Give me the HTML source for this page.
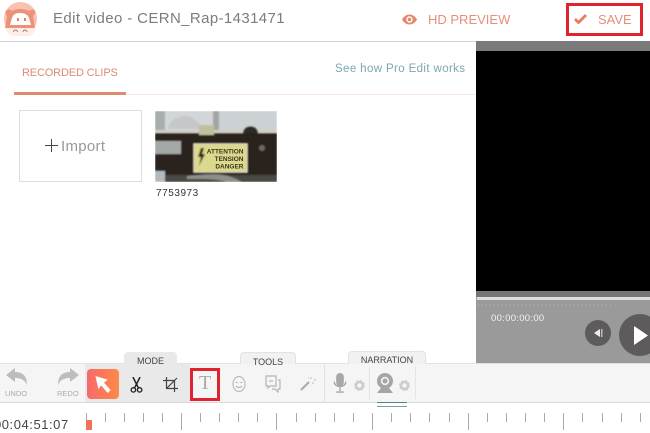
<!DOCTYPE html>
<html><head><meta charset="utf-8"><style>
html,body{margin:0;padding:0}
body{width:650px;height:430px;overflow:hidden;background:#fff;position:relative;font-family:"Liberation Sans",sans-serif}
.a{position:absolute;white-space:nowrap}
.tick{position:absolute;top:413px;width:1px;height:9px;background:#aaa}
.tall{height:17px;background:#aaa}
.tab{position:absolute;background:#f1f1f1;border:1px solid #e2e2e2;border-bottom:none;border-radius:4px 4px 0 0;font-size:9px;color:#444;text-align:center;box-sizing:border-box}
</style></head><body>
<!-- Header -->
<div class="a" style="left:0;top:41px;width:650px;height:1px;background:#d5d5d5"></div>
<svg class="a" style="left:0;top:0" width="42" height="36" viewBox="0 0 42 36">
<defs><filter id="s"><feGaussianBlur stdDeviation=".35"/></filter></defs>
<g filter="url(#s)">
<circle cx="20.500" cy="18.500" r="16.500" fill="#f9c2b0"/>
<path d="M5 28a16.500 16.500 0 0 0 31 0z" fill="#fdeee8"/>
<path d="M6 11c1-2 4-2 6 0 2-1 4-2 8-2s7 1 9 2c2-2 5-2 6 0 1 2-1 4-2 5l2 12H5l2-12c-1-1-2-3-1-5z" fill="#ec9279"/>
<path d="M10 25l2-7c1-3 3-5 8-5s8 2 9 5l2 7z" fill="#fff"/>
<rect x="17" y="18" width="1.800" height="3" fill="#d9785f"/><rect x="24" y="18" width="1.800" height="3" fill="#d9785f"/>
<path d="M13.500 32a2 2 0 0 1 4 0M23 32a2 2 0 0 1 4 0" fill="none" stroke="#b8766a"/>
</g>
</svg>
<div class="a" style="left:53px;top:10px;font-size:15px;color:#7c7c7c;letter-spacing:.38px;line-height:18px">Edit video - CERN_Rap-1431471</div>
<svg class="a" style="left:402px;top:14px" width="15" height="11" viewBox="0 0 15 11"><path d="M0 5.500C2 2 5 .5 7.500.5S13 2 15 5.500C13 9 10 10.500 7.500 10.500S2 9 0 5.500z" fill="#e3876c"/><circle cx="7.500" cy="5.500" r="3.200" fill="#fff"/><circle cx="7.500" cy="5.500" r="1.800" fill="#e3876c"/></svg>
<div class="a" style="left:428px;top:12px;font-size:13px;color:#e3907a;letter-spacing:0;line-height:16px">HD PREVIEW</div>
<div class="a" style="left:566px;top:3px;width:77px;height:33px;box-sizing:border-box;border:3px solid #e0242f"></div>
<svg class="a" style="left:574px;top:13px" width="13" height="11" viewBox="0 0 13 11"><path d="M1 6l3.500 3.500L12 2" fill="none" stroke="#e67c5e" stroke-width="2.800"/></svg>
<div class="a" style="left:598px;top:12px;font-size:13px;color:#e3907a;line-height:16px">SAVE</div>
<!-- Tabs -->
<div class="a" style="left:22px;top:66px;font-size:11px;color:#dc8a75;line-height:14px;letter-spacing:-.15px">RECORDED CLIPS</div>
<div class="a" style="left:14px;top:92px;width:112px;height:3px;background:#e08a72"></div>
<div class="a" style="left:126px;top:94px;width:350px;height:1px;background:#f8e6e0"></div>
<div class="a" style="left:335px;top:62px;font-size:11.500px;color:#7ba6b3;line-height:14px;letter-spacing:.38px">See how Pro Edit works</div>
<!-- Import -->
<div class="a" style="left:19px;top:110px;width:123px;height:72px;box-sizing:border-box;border:1px solid #ddd"></div>
<div class="a" style="left:45px;top:145px;width:13px;height:1.200px;background:#444"></div>
<div class="a" style="left:51px;top:139px;width:1.200px;height:13px;background:#444"></div>
<div class="a" style="left:61px;top:138px;font-size:15px;color:#999;line-height:18px;letter-spacing:.3px">Import</div>
<!-- Thumbnail -->
<svg class="a" style="left:155px;top:111px" width="122" height="71" viewBox="0 0 122 71">
<defs><filter id="b"><feGaussianBlur stdDeviation=".7"/></filter></defs>
<g filter="url(#b)">
<rect width="122" height="71" fill="#2a241c"/>
<rect width="122" height="20" fill="#ccd1d4"/>
<rect x="0" y="0" width="10" height="20" fill="#a8adae"/>
<rect x="10" y="0" width="48" height="20" fill="#d2d6d8"/>
<path d="M13 18c1-12 18-16 26-10s8 8 6 10z" fill="#c4c8ca"/>
<rect x="58" y="0" width="6" height="20" fill="#a3a6a4"/>
<rect x="0" y="19" width="122" height="3" fill="#d2d0c4"/>
<rect x="44" y="14" width="15" height="10" fill="#c2bf9f"/>
<path d="M88 22c0-9 15-9 15 0z" fill="#2e2c28"/>
<rect x="0" y="30" width="26" height="13" fill="#a4a8a6"/>
<rect x="0" y="60" width="10" height="11" fill="#b4b9bb"/>
<path d="M10 64h112v7H10z" fill="#4a4a44"/>
<path d="M32 65c30-3 40-3 55 6H72c-10-3-20-3-40-3z" fill="#8e8e8a"/>
<rect x="39" y="33" width="53" height="28" fill="#dcd88c" stroke="#dedec8"/>
<path d="M46 37l-3 9h3l-2 9 6-12h-3l2-6z" fill="#2e2c1c"/>
<circle cx="107" cy="37" r="3" fill="#6a6a60"/>
</g>
<text x="88.500" y="42.500" text-anchor="end" font-size="6.500" font-weight="bold" fill="#3a3820" font-family="Liberation Sans">ATTENTION</text>
<text x="88.500" y="50" text-anchor="end" font-size="6.500" font-weight="bold" fill="#3a3820" font-family="Liberation Sans">TENSION</text>
<text x="88.500" y="57.500" text-anchor="end" font-size="6.500" font-weight="bold" fill="#3a3820" font-family="Liberation Sans">DANGER</text>
</svg>
<div class="a" style="left:156px;top:187px;font-size:10px;color:#333;line-height:13px;letter-spacing:.55px">7753973</div>
<!-- Video panel -->
<div class="a" style="left:476px;top:41px;width:174px;height:322px;background:#9a9a9a"></div>
<div class="a" style="left:476px;top:41px;width:174px;height:10px;background:#7a7a7a"></div>
<div class="a" style="left:476px;top:51px;width:174px;height:240px;background:#000"></div>
<div class="a" style="left:476px;top:291px;width:174px;height:6px;background:#747474"></div>
<div class="a" style="left:477px;top:297px;width:173px;height:3px;background:#ddd"></div>
<div class="a" style="left:478px;top:304px;width:135px;height:2px;background:repeating-linear-gradient(90deg,#a9a9a9 0 1px,#9a9a9a 1px 4px)"></div>
<div class="a" style="left:491px;top:312px;font-size:9.500px;color:#f2f2f2;line-height:13px;letter-spacing:.3px">00:00:00:00</div>
<div class="a" style="left:585px;top:320px;width:26px;height:26px;border-radius:50%;background:#5d5b5b"></div>
<svg class="a" style="left:594px;top:329px" width="9" height="8" viewBox="0 0 9 8"><path d="M0 4l6-4v8z" fill="#eee"/><rect x="7" width="1.500" height="8" fill="#bbb"/></svg>
<div class="a" style="left:619px;top:314px;width:42px;height:42px;border-radius:50%;background:#5d5b5b"></div>
<svg class="a" style="left:633px;top:326px" width="17" height="19" viewBox="0 0 17 19"><path d="M1 0l14 9.500L1 19z" fill="#fff"/></svg>
<!-- Toolbar -->
<div class="a" style="left:0;top:363px;width:650px;height:40px;background:#f5f5f5;border-top:1px solid #e2e2e2;border-bottom:1px solid #d8d8d8;box-sizing:border-box"></div>
<div class="a" style="left:85px;top:364px;width:105px;height:38px;background:#e9e9e9"></div>
<div class="tab" style="left:124px;top:352px;width:53px;height:12px;background:#e9e9e9;line-height:16px;border-color:#e9e9e9">MODE</div>
<div class="tab" style="left:240px;top:352px;width:56px;height:12px;line-height:18px">TOOLS</div>
<div class="tab" style="left:348px;top:351px;width:78px;height:13px;line-height:17px">NARRATION</div>
<svg class="a" style="left:6px;top:368px" width="22" height="17" viewBox="0 0 22 17"><path d="M0 7l9-7v4c8 0 12 4 12 13-2-5-6-7-12-7v4z" fill="#bdbdbd"/></svg>
<div class="a" style="left:5px;top:389px;font-size:7.500px;color:#aaa;line-height:9px">UNDO</div>
<svg class="a" style="left:57px;top:368px" width="22" height="17" viewBox="0 0 22 17"><path d="M22 7l-9-7v4C5 4 1 8 1 17c2-5 6-7 12-7v4z" fill="#bdbdbd"/></svg>
<div class="a" style="left:57px;top:389px;font-size:7.500px;color:#aaa;line-height:9px">REDO</div>
<div class="a" style="left:87px;top:369px;width:32px;height:30px;border-radius:4px;background:linear-gradient(90deg,#f8696b,#fd8a45)"></div>
<svg class="a" style="left:95px;top:376px" width="17" height="17" viewBox="0 0 17 18"><path d="M0 0l13 4-4 3 7 8-3 3-7-8-3 4z" fill="#fff"/></svg>
<svg class="a" style="left:130px;top:377px" width="13" height="16" viewBox="0 0 14 18"><path d="M3 0l6 12M11 0L5 12" stroke="#222" stroke-width="1.700" fill="none"/><circle cx="3.500" cy="14.500" r="2.500" fill="none" stroke="#222" stroke-width="1.500"/><circle cx="10.500" cy="14.500" r="2.500" fill="none" stroke="#222" stroke-width="1.500"/></svg>
<svg class="a" style="left:163px;top:377px" width="15" height="15" viewBox="0 0 15 15"><path d="M3.500 0v11.500H15M0 3.500h11.500V15M3.500 11.500L14 1" fill="none" stroke="#444" stroke-width="1.200"/></svg>
<div class="a" style="left:190px;top:368px;width:30px;height:33px;box-sizing:border-box;border:3px solid #e0242f;background:#f5f5f5"></div>
<div class="a" style="left:199px;top:372px;font-family:'Liberation Serif',serif;font-size:20px;line-height:22px;color:#aaa">T</div>
<svg class="a" style="left:232px;top:375px" width="14" height="18" viewBox="0 0 14 18"><ellipse cx="7" cy="9" rx="6" ry="7.500" fill="none" stroke="#bbb" stroke-width="1.200"/><circle cx="4.700" cy="7.500" r=".8" fill="#aaa"/><circle cx="9.300" cy="7.500" r=".8" fill="#aaa"/><path d="M4 11c2 2 4 2 6 0" fill="none" stroke="#aaa"/></svg>
<svg class="a" style="left:265px;top:375px" width="16" height="18" viewBox="0 0 16 18"><path d="M1 1h10v10H5l-2 2v-2H1z" fill="none" stroke="#b5b5b5" stroke-width="1.200"/><path d="M13 5h2v9h-2v3l-3-3H7" fill="none" stroke="#b5b5b5" stroke-width="1.200"/><path d="M4 6h4" stroke="#aaa"/></svg>
<svg class="a" style="left:300px;top:376px" width="16" height="15" viewBox="0 0 16 15"><path d="M1 14l8-8" stroke="#aaa" stroke-width="2"/><path d="M11 1v2M14 4h2M12 7h2M8 2h1" stroke="#bbb"/></svg>
<div class="a" style="left:324px;top:364px;width:1px;height:38px;background:#e2e2e2"></div>
<svg class="a" style="left:333px;top:373px" width="14" height="20" viewBox="0 0 14 21"><rect x="3" y="0" width="8" height="14" rx="4" fill="#a8a8a8"/><path d="M1 9c0 7 12 7 12 0" fill="none" stroke="#a8a8a8" stroke-width="1.500"/><path d="M7 15v4M3 20h8" stroke="#a8a8a8" stroke-width="1.500"/></svg>
<svg class="a" style="left:354px;top:380px" width="11" height="11" viewBox="0 0 11 11"><circle cx="5.500" cy="5.500" r="3.500" fill="none" stroke="#ccc" stroke-width="2.500"/><circle cx="5.500" cy="5.500" r="5" fill="none" stroke="#ccc" stroke-width="1" stroke-dasharray="2 2"/></svg>
<div class="a" style="left:369px;top:367px;width:1px;height:32px;background:#e4e4e4"></div>
<svg class="a" style="left:376px;top:373px" width="18" height="20" viewBox="0 0 18 20"><circle cx="9" cy="8" r="8" fill="#a5a5a5"/><circle cx="9" cy="8" r="4.200" fill="#f0f0f0"/><circle cx="9" cy="8" r="2.500" fill="#a5a5a5"/><path d="M5 15h8l4 5H1z" fill="#a5a5a5"/></svg>
<svg class="a" style="left:399px;top:380px" width="11" height="11" viewBox="0 0 11 11"><circle cx="5.500" cy="5.500" r="3.500" fill="none" stroke="#ccc" stroke-width="2.500"/><circle cx="5.500" cy="5.500" r="5" fill="none" stroke="#ccc" stroke-width="1" stroke-dasharray="2 2"/></svg>
<div class="a" style="left:415px;top:367px;width:1px;height:32px;background:#e4e4e4"></div>
<!-- Timeline -->
<div class="a" style="left:0;top:403px;width:650px;height:27px;background:#fff"></div>
<div class="a" style="left:377px;top:402px;width:30px;height:1px;background:#5b8290"></div>
<div class="a" style="left:377px;top:406px;width:30px;height:1px;background:#7f9ca6"></div>
<div class="a" style="left:-6px;top:417px;font-size:13px;color:#444;line-height:16px;letter-spacing:.55px">00:04:51:07</div>
<div class="a" style="left:86px;top:420px;width:6px;height:10px;background:#f2735a"></div>
<div class="tick" style="left:86px;top:413px;height:7px"></div>
<div class="tick" style="left:105px"></div><div class="tick" style="left:124px"></div><div class="tick" style="left:143px"></div><div class="tick" style="left:162px"></div><div class="tick tall" style="left:181px"></div>
<div class="tick" style="left:200px"></div><div class="tick" style="left:219px"></div><div class="tick" style="left:238px"></div><div class="tick" style="left:257px"></div><div class="tick tall" style="left:276px"></div>
<div class="tick" style="left:296px"></div><div class="tick" style="left:315px"></div><div class="tick" style="left:334px"></div><div class="tick" style="left:353px"></div><div class="tick tall" style="left:372px"></div>
<div class="tick" style="left:391px"></div><div class="tick" style="left:410px"></div><div class="tick" style="left:429px"></div><div class="tick" style="left:449px"></div><div class="tick tall" style="left:468px"></div>
<div class="tick" style="left:487px"></div><div class="tick" style="left:506px"></div><div class="tick" style="left:525px"></div><div class="tick" style="left:544px"></div><div class="tick tall" style="left:563px"></div>
<div class="tick" style="left:582px"></div><div class="tick" style="left:602px"></div><div class="tick" style="left:621px"></div><div class="tick" style="left:640px"></div>
</body></html>
